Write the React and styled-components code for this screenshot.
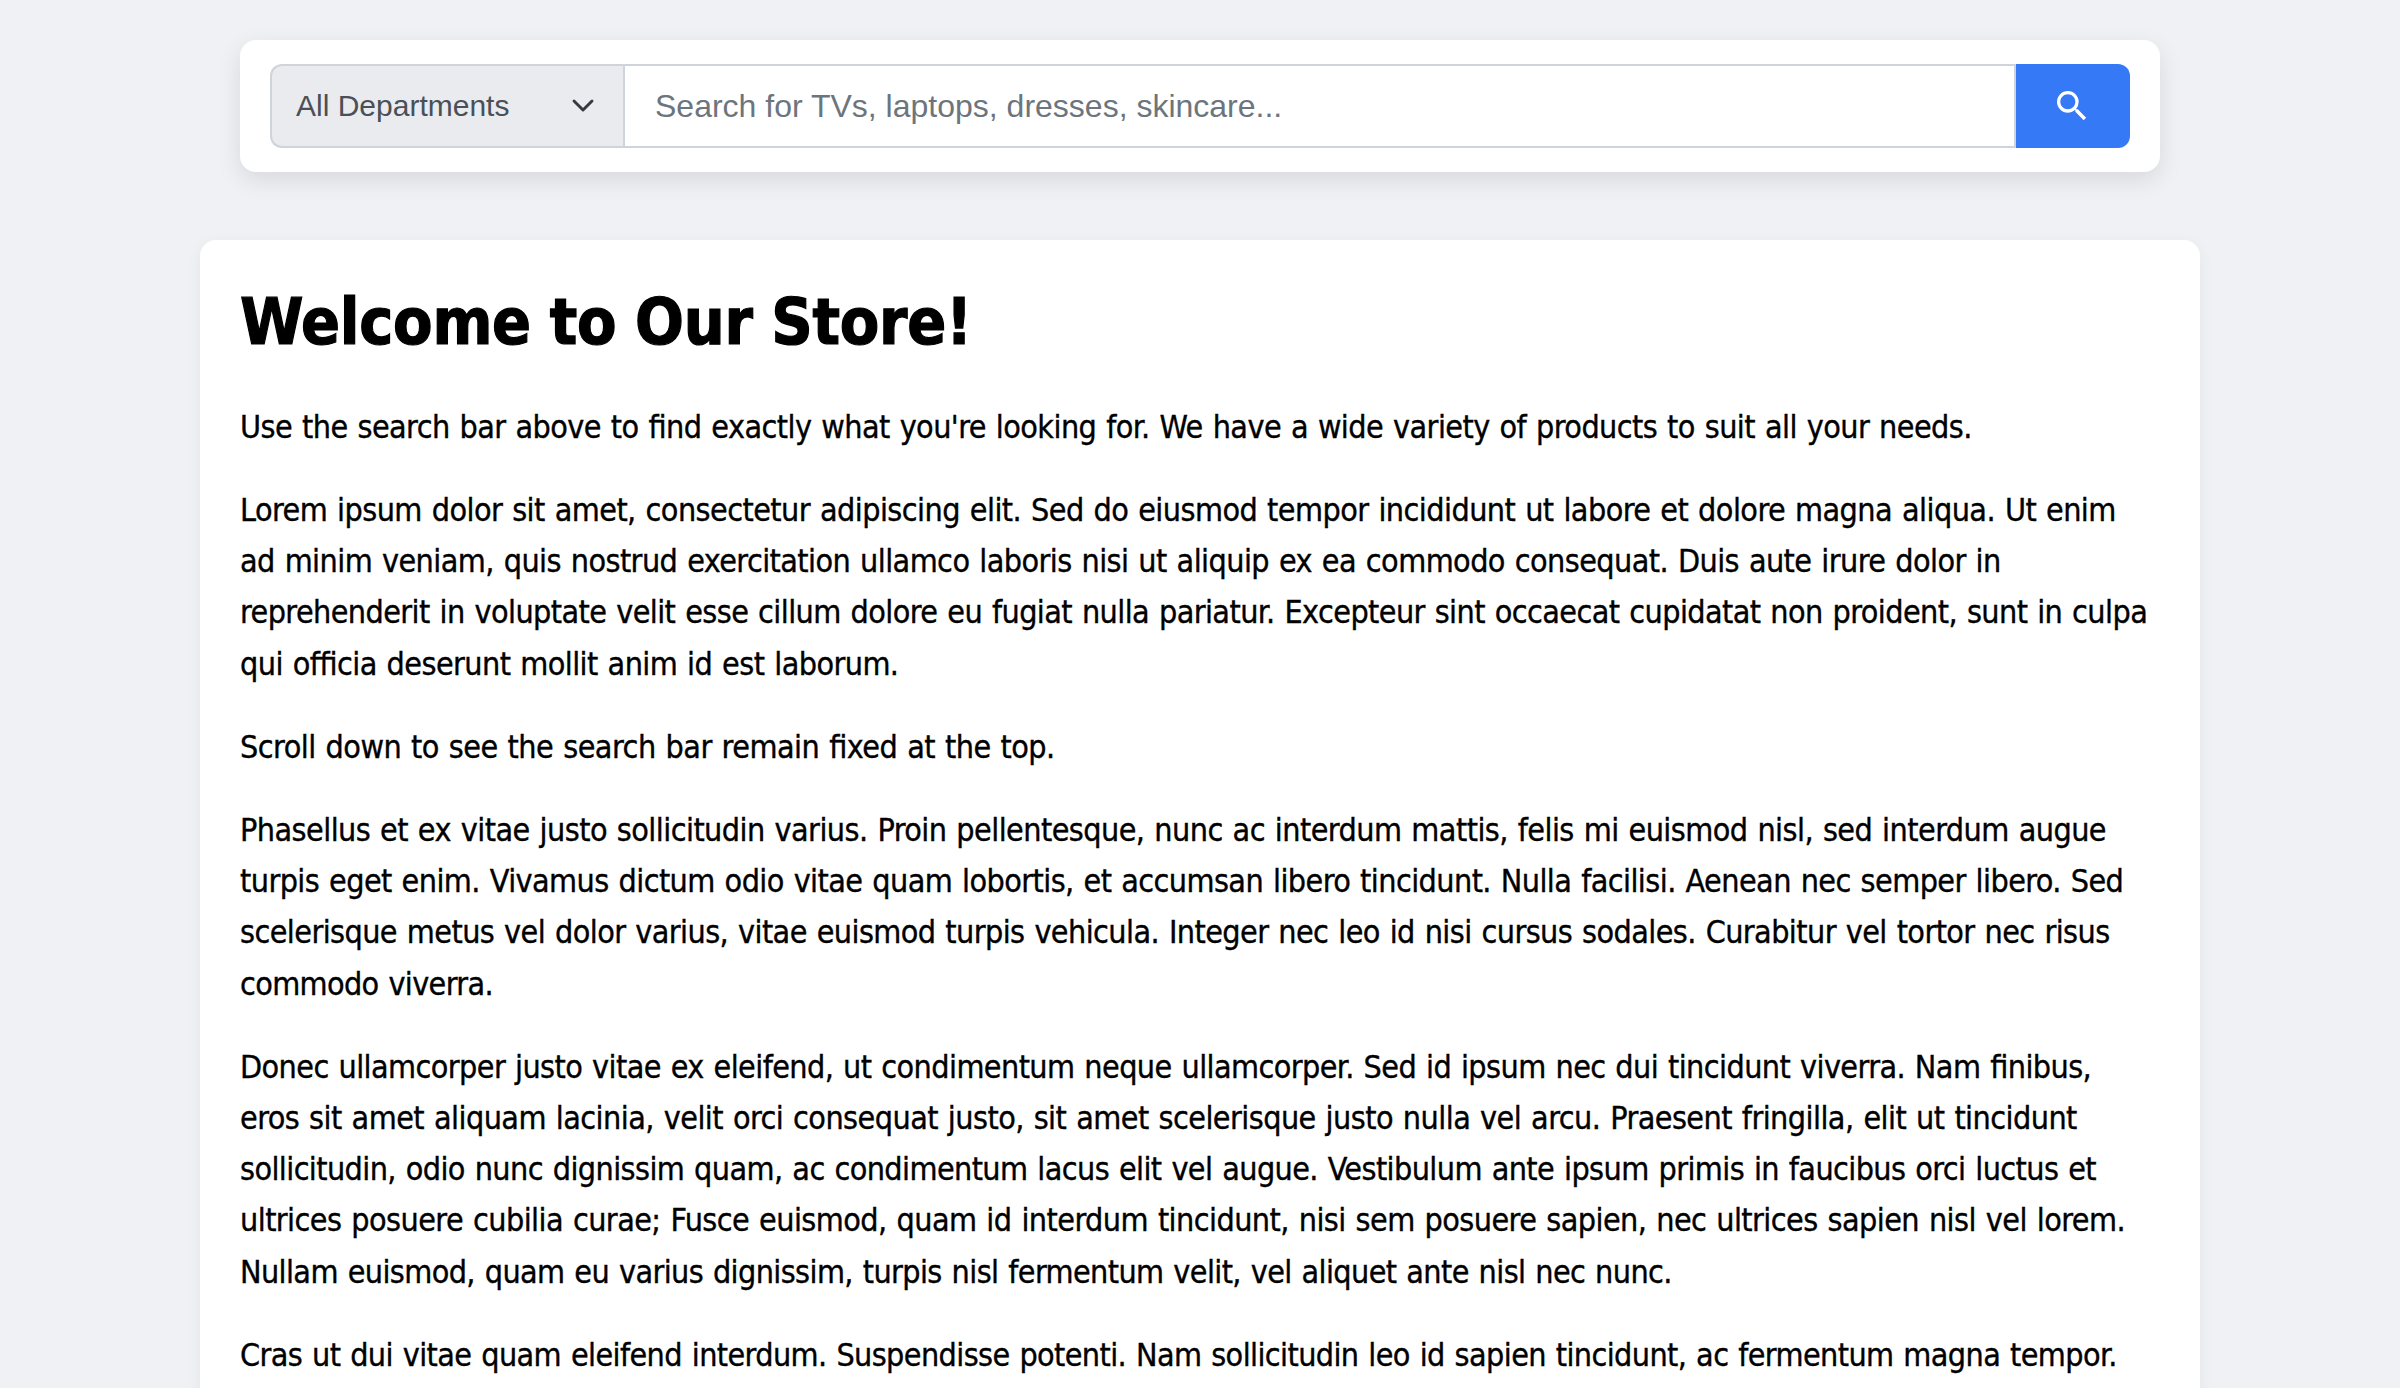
import React, { useLayoutEffect, useRef, useState } from "react";
import styled, { createGlobalStyle } from "styled-components";

const GlobalStyle = createGlobalStyle`
  * { box-sizing: border-box; }
  body { margin: 0; background: #eff1f5; overflow: hidden; }
`;

const Page = styled.div`
  height: 1388px;
  overflow: hidden;
  padding-top: 40px;
  display: flex;
  flex-direction: column;
  align-items: center;
  background: #eff1f5;
  color: #000;
  font-family: "DejaVu Sans Condensed", "DejaVu Sans", sans-serif;
  font-stretch: condensed;
`;

const SearchCard = styled.header`
  flex: none;
  width: 1920px;
  height: 132px;
  padding: 24px 30px;
  display: flex;
  background: #fff;
  border-radius: 16px;
  box-shadow: 0 8px 24px rgba(0, 0, 0, 0.1);
`;

const Department = styled.button`
  width: 353px;
  padding: 0 28px 0 24px;
  display: flex;
  align-items: center;
  justify-content: space-between;
  border: 2px solid #ced4da;
  border-right: 0;
  border-radius: 12px 0 0 12px;
  background: #e9ebef;
  color: #495057;
  font: 30px/1 "Liberation Sans", Arial, sans-serif;
`;

const Chevron = styled.svg`
  width: 24px;
  height: 24px;
`;

const SearchInput = styled.input`
  flex: 1;
  min-width: 0;
  padding: 0 30px;
  border: 2px solid #ced4da;
  border-radius: 0;
  outline: none;
  background: #fff;
  font: 32px/1 "Liberation Sans", Arial, sans-serif;
  &::placeholder { color: #6c757d; opacity: 1; }
`;

const SearchButton = styled.button`
  width: 114px;
  padding: 0 2px 0 0;
  display: flex;
  align-items: center;
  justify-content: center;
  border: 0;
  border-radius: 0 12px 12px 0;
  background: #3579f6;
  color: #fff;
`;

const SearchIcon = styled.svg`
  width: 40px;
  height: 40px;
  fill: currentColor;
`;

const Content = styled.main`
  flex: none;
  width: 2000px;
  margin-top: 68px;
  padding: 40px;
  background: #fff;
  border-radius: 16px;
  box-shadow: 0 4px 16px rgba(0, 0, 0, 0.05);
`;

const Title = styled.h1`
  margin: 0 0 40.8px;
  padding-top: 4px;
  font-size: 64px;
  line-height: 77px;
  font-weight: 700;
  word-spacing: -1px;
  -webkit-text-stroke: 1.2px;
`;

const Paragraph = styled.p`
  margin: 0 0 32px;
  font-size: 32px;
  line-height: 51.2px;
  word-spacing: 1.3px;
  -webkit-text-stroke: 0.35px;
`;

const Line = styled.span`
  display: block;
  width: max-content;
  white-space: nowrap;
  font-feature-settings: "liga" 1;
`;

// Tracks a line of text so that it is set to the given measure.
function FittedLine({ measure, children }) {
  const ref = useRef(null);
  const [tracking, setTracking] = useState(0);
  useLayoutEffect(() => {
    const natural = ref.current.getBoundingClientRect().width;
    setTracking((measure - natural) / children.length);
  }, [measure, children]);
  return <Line ref={ref} style={{ letterSpacing: `${tracking}px` }}>{children}</Line>;
}

const paragraphs = [
  [["Use the search bar above to find exactly what you're looking for. We have a wide variety of products to suit all your needs.", 1731.3]],
  [
    ["Lorem ipsum dolor sit amet, consectetur adipiscing elit. Sed do eiusmod tempor incididunt ut labore et dolore magna aliqua. Ut enim", 1875.8],
    ["ad minim veniam, quis nostrud exercitation ullamco laboris nisi ut aliquip ex ea commodo consequat. Duis aute irure dolor in", 1760.7],
    ["reprehenderit in voluptate velit esse cillum dolore eu fugiat nulla pariatur. Excepteur sint occaecat cupidatat non proident, sunt in culpa", 1907.2],
    ["qui officia deserunt mollit anim id est laborum.", 657.3],
  ],
  [["Scroll down to see the search bar remain fixed at the top.", 814.2]],
  [
    ["Phasellus et ex vitae justo sollicitudin varius. Proin pellentesque, nunc ac interdum mattis, felis mi euismod nisl, sed interdum augue", 1866],
    ["turpis eget enim. Vivamus dictum odio vitae quam lobortis, et accumsan libero tincidunt. Nulla facilisi. Aenean nec semper libero. Sed", 1883.3],
    ["scelerisque metus vel dolor varius, vitae euismod turpis vehicula. Integer nec leo id nisi cursus sodales. Curabitur vel tortor nec risus", 1869.6],
    ["commodo viverra.", 253],
  ],
  [
    ["Donec ullamcorper justo vitae ex eleifend, ut condimentum neque ullamcorper. Sed id ipsum nec dui tincidunt viverra. Nam finibus,", 1850.6],
    ["eros sit amet aliquam lacinia, velit orci consequat justo, sit amet scelerisque justo nulla vel arcu. Praesent fringilla, elit ut tincidunt", 1836.8],
    ["sollicitudin, odio nunc dignissim quam, ac condimentum lacus elit vel augue. Vestibulum ante ipsum primis in faucibus orci luctus et", 1856],
    ["ultrices posuere cubilia curae; Fusce euismod, quam id interdum tincidunt, nisi sem posuere sapien, nec ultrices sapien nisl vel lorem.", 1885],
    ["Nullam euismod, quam eu varius dignissim, turpis nisl fermentum velit, vel aliquet ante nisl nec nunc.", 1431.8],
  ],
  [["Cras ut dui vitae quam eleifend interdum. Suspendisse potenti. Nam sollicitudin leo id sapien tincidunt, ac fermentum magna tempor.", 1876.8]],
];

export default function App() {
  return (
    <>
      <GlobalStyle />
      <Page>
        <SearchCard>
          <Department type="button">
            All Departments
            <Chevron viewBox="0 0 24 24" fill="none" stroke="#343a40" strokeWidth="2.9" strokeLinecap="round" strokeLinejoin="round">
              <path d="M3 7l9 9 9-9" />
            </Chevron>
          </Department>
          <SearchInput placeholder="Search for TVs, laptops, dresses, skincare..." />
          <SearchButton type="button" aria-label="Search">
            <SearchIcon viewBox="0 0 24 24">
              <path d="M15.5 14h-.79l-.28-.27A6.471 6.471 0 0 0 16 9.5 6.5 6.5 0 1 0 9.5 16c1.61 0 3.09-.59 4.23-1.57l.27.28v.79l5 4.99L20.49 19l-4.99-5zm-6 0C7.01 14 5 11.99 5 9.5S7.01 5 9.5 5 14 7.01 14 9.5 11.99 14 9.5 14z" />
            </SearchIcon>
          </SearchButton>
        </SearchCard>
        <Content>
          <Title><FittedLine measure={732}>Welcome to Our Store!</FittedLine></Title>
          {paragraphs.map((lines, i) => (
            <Paragraph key={i}>
              {lines.map(([text, measure]) => (
                <FittedLine key={text} measure={measure}>{text}</FittedLine>
              ))}
            </Paragraph>
          ))}
        </Content>
      </Page>
    </>
  );
}
